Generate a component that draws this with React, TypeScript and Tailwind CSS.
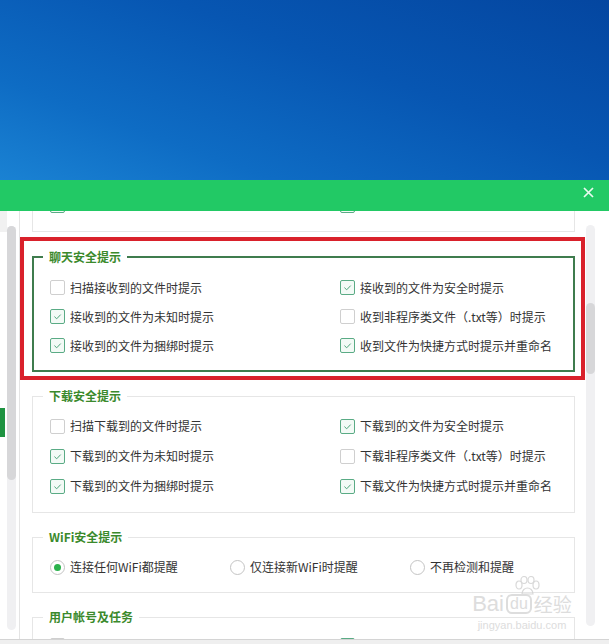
import type { ReactNode } from 'react'

function Check({ checked = false }: { checked?: boolean }) {
  if (!checked) {
    return <span className="h-[15px] w-[15px] shrink-0 rounded-[2px] border border-[#cfcfcf] bg-white" />
  }
  return (
    <span className="flex h-[15px] w-[15px] shrink-0 items-center justify-center rounded-[2px] border border-[#5aab85] bg-[#f3faf6]">
      <svg width="11" height="11" viewBox="0 0 11 11">
        <path d="M2.4 5.6l2.3 2.2 4-4.2" fill="none" stroke="#4ea47b" strokeWidth="1" />
      </svg>
    </span>
  )
}

function Radio({ checked = false }: { checked?: boolean }) {
  return (
    <span className="flex h-[15px] w-[15px] shrink-0 items-center justify-center rounded-full border border-[#c4c4c4] bg-white">
      {checked && <span className="h-[7px] w-[7px] rounded-full bg-[#2bb24c]" />}
    </span>
  )
}

function Option({ label, checked }: { label: string; checked?: boolean }) {
  return (
    <div className="flex items-center gap-[5px]">
      <Check checked={checked} />
      <span className="whitespace-nowrap">{label}</span>
    </div>
  )
}

function Card({ title, strong = false, className = '', children }: { title: string; strong?: boolean; className?: string; children: ReactNode }) {
  return (
    <div className={`w-[543px] bg-white ${strong ? 'border-2 border-[#3f7c4d]' : 'border border-[#e6e6e6]'} ${className}`}>
      <div className={`-mt-[9px] w-fit bg-white px-[6px] text-[12px] font-semibold leading-[16px] text-[#3b8a2c] ${strong ? 'ml-[9px]' : 'ml-[10px]'}`}>
        {title}
      </div>
      <div className={strong ? 'pl-[16px]' : 'pl-[17px]'}>{children}</div>
    </div>
  )
}

const chatLeft = [
  { label: '扫描接收到的文件时提示', checked: false },
  { label: '接收到的文件为未知时提示', checked: true },
  { label: '接收到的文件为捆绑时提示', checked: true },
]
const chatRight = [
  { label: '接收到的文件为安全时提示', checked: true },
  { label: '收到非程序类文件（.txt等）时提示', checked: false },
  { label: '收到文件为快捷方式时提示并重命名', checked: true },
]
const downLeft = [
  { label: '扫描下载到的文件时提示', checked: false },
  { label: '下载到的文件为未知时提示', checked: true },
  { label: '下载到的文件为捆绑时提示', checked: true },
]
const downRight = [
  { label: '下载到的文件为安全时提示', checked: true },
  { label: '下载非程序类文件（.txt等）时提示', checked: false },
  { label: '下载文件为快捷方式时提示并重命名', checked: true },
]

function interleave<T>(a: T[], b: T[]) {
  return a.flatMap((item, i) => [item, b[i]])
}

export default function App() {
  return (
    <div className="relative flex h-[644px] w-[609px] flex-col overflow-hidden bg-white font-['Microsoft_YaHei','Noto_Sans_CJK_SC',sans-serif] text-[12px] text-[#333]">
      {/* desktop */}
      <div className="h-[180px] shrink-0 bg-[linear-gradient(200deg,#0446a0_0%,#0756b2_40%,#0e6cc4_75%,#1a82d3_100%)]" />

      {/* title bar */}
      <div className="flex h-[31px] shrink-0 items-start justify-end bg-[#22c965] pr-[15px] pt-[7px]">
        <svg width="11" height="11" viewBox="0 0 11 11">
          <path d="M1 1l9 9M10 1l-9 9" stroke="#eafaf0" strokeWidth="1.7" />
        </svg>
      </div>

      {/* body */}
      <div className="flex h-[428px] shrink-0">
        {/* sidebar */}
        <div className="flex w-[20px] shrink-0 border-r border-[#e4e4e4]">
          <div className="flex w-[7px] flex-col">
            <div className="h-[21px] bg-[#f1f1f1]" />
            <div className="mt-[176px] h-[29px] w-[5px] bg-[#1e9341]" />
          </div>
          <div className="w-[9px] pt-[15px]">
            <div className="h-[404px] rounded-full bg-[#f0f0f2]">
              <div className="h-[254px] rounded-full bg-[#d7d7d9]" />
            </div>
          </div>
        </div>

        {/* content */}
        <div className="w-[566px] shrink-0 overflow-hidden">
          <div className="ml-[12px] flex h-[21px] w-[543px] flex-col border-x border-b border-[#e6e6e6]">
            <div className="-mt-[13px] grid grid-cols-[290px_1fr] pl-[17px]">
              <Check checked />
              <Check checked />
            </div>
          </div>

          <div className="mt-[5px] w-[565px] border-4 border-[#d9212b] pb-[4px] pl-[8px] pt-[15px]">
            <Card title="聊天安全提示" strong>
              <div className="mt-[8px] grid grid-cols-[290px_1fr] auto-rows-[29px] items-center pb-[10px]">
                {interleave(chatLeft, chatRight).map(o => (
                  <Option key={o.label} label={o.label} checked={o.checked} />
                ))}
              </div>
            </Card>
          </div>

          <Card title="下载安全提示" className="ml-[12px] mt-[16px]">
            <div className="mt-[7px] grid grid-cols-[290px_1fr] auto-rows-[30px] items-center pb-[11px]">
              {interleave(downLeft, downRight).map(o => (
                <Option key={o.label} label={o.label} checked={o.checked} />
              ))}
            </div>
          </Card>

          <Card title="WiFi安全提示" className="ml-[12px] mt-[24px]">
            <div className="mt-[7px] grid h-[30px] grid-cols-[180px_180px_1fr] items-center">
              {[
                { label: '连接任何WiFi都提醒', checked: true },
                { label: '仅连接新WiFi时提醒', checked: false },
                { label: '不再检测和提醒', checked: false },
              ].map(o => (
                <div key={o.label} className="flex items-center gap-[5px]">
                  <Radio checked={o.checked} />
                  <span className="whitespace-nowrap">{o.label}</span>
                </div>
              ))}
            </div>
            <div className="h-[10px]" />
          </Card>

          <Card title="用户帐号及任务" className="ml-[12px] mt-[24px]">
            <div className="mt-[13px] grid grid-cols-[290px_1fr]">
              <Check />
              <Check checked />
            </div>
          </Card>
        </div>

        {/* right scrollbar */}
        <div className="w-[9px] shrink-0 pt-[14px]">
          <div className="h-[401px] rounded-full bg-[#f0f0f2] pt-[78px]">
            <div className="h-[71px] rounded-full bg-[#d7d7d9]" />
          </div>
        </div>
      </div>

      <div className="h-[5px] shrink-0 border-t border-[#d4d4d4] bg-[#efefef]" />

      {/* watermark */}
      <div className="pointer-events-none absolute left-[467px] top-[576px] flex w-[110px] flex-col items-center text-[#d5d5d5] opacity-80">
        <svg width="30" height="20" viewBox="0 0 30 20" className="-mb-[3px] ml-[10px]">
          <g fill="none" stroke="#d0d0d0" strokeWidth="1.2">
            <ellipse cx="7" cy="9" rx="3" ry="4" />
            <ellipse cx="12" cy="4" rx="3" ry="3.5" />
            <ellipse cx="19" cy="4" rx="3" ry="3.5" />
            <ellipse cx="24" cy="9" rx="3" ry="4" />
            <path d="M10 18c0-4 3-6 5.5-6S21 14 21 18z" />
          </g>
        </svg>
        <div className="flex items-center font-['Liberation_Sans',sans-serif] text-[22px] leading-[22px]">
          <span>Bai</span>
          <span className="mx-[2px] rounded-[6px] border-2 border-[#d5d5d5] px-[2px] text-[16px] leading-[16px]">du</span>
          <span className="font-['Noto_Sans_CJK_SC',sans-serif] text-[19px]">经验</span>
        </div>
        <div className="mt-[4px] font-['Liberation_Sans',sans-serif] text-[11px] leading-[12px]">jingyan.baidu.com</div>
      </div>
    </div>
  )
}
